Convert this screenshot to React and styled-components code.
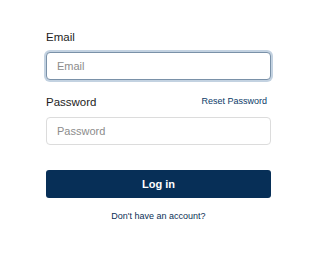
import styled, { createGlobalStyle } from "styled-components";

const GlobalStyle = createGlobalStyle`
  body {
    margin: 0;
    background: #ffffff;
    font-family: "Liberation Sans", Arial, sans-serif;
  }
`;

const Form = styled.form`
  width: 225px;
  margin-left: 46px;
  padding-top: 30px;
  display: flex;
  flex-direction: column;
`;

const LabelRow = styled.div`
  display: flex;
  justify-content: space-between;
  align-items: flex-start;
  margin-top: ${(p) => (p.$first ? "0" : "15px")};
  margin-bottom: 8px;
`;

const Label = styled.label`
  font-size: 11.5px;
  line-height: 14px;
  color: #1d1d1d;
`;

const ResetLink = styled.a`
  font-size: 9px;
  line-height: 12px;
  color: #0b3a68;
  text-decoration: none;
  margin-right: 4px;
  cursor: pointer;
`;

const Input = styled.input`
  box-sizing: border-box;
  width: 100%;
  height: 28px;
  padding: 0 10px;
  border: 1px solid ${(p) => (p.$active ? "#7a91a8" : "#dcdcdc")};
  border-radius: 4px;
  box-shadow: ${(p) => (p.$active ? "0 0 0 2px #c3d2e1" : "none")};
  font-family: inherit;
  font-size: 11px;
  color: #222;
  outline: none;
  background: #fff;

  &::placeholder {
    color: #8c8c8c;
  }
`;

const SubmitButton = styled.button`
  box-sizing: border-box;
  margin-top: 25px;
  height: 28px;
  width: 100%;
  border: none;
  border-radius: 3px;
  background: #072f57;
  color: #ffffff;
  font-family: inherit;
  font-size: 11px;
  font-weight: bold;
  cursor: pointer;
`;

const SignupLink = styled.a`
  margin-top: 12px;
  align-self: center;
  font-size: 9px;
  line-height: 12px;
  color: #0b2f55;
  text-decoration: none;
  cursor: pointer;
`;

export default function App() {
  return (
    <>
      <GlobalStyle />
      <Form onSubmit={(e) => e.preventDefault()}>
        <LabelRow $first>
          <Label htmlFor="email">Email</Label>
        </LabelRow>
        <Input id="email" type="email" placeholder="Email" $active autoFocus />

        <LabelRow>
          <Label htmlFor="password">Password</Label>
          <ResetLink>Reset Password</ResetLink>
        </LabelRow>
        <Input id="password" type="password" placeholder="Password" />

        <SubmitButton type="submit">Log in</SubmitButton>
        <SignupLink>Don't have an account?</SignupLink>
      </Form>
    </>
  );
}
